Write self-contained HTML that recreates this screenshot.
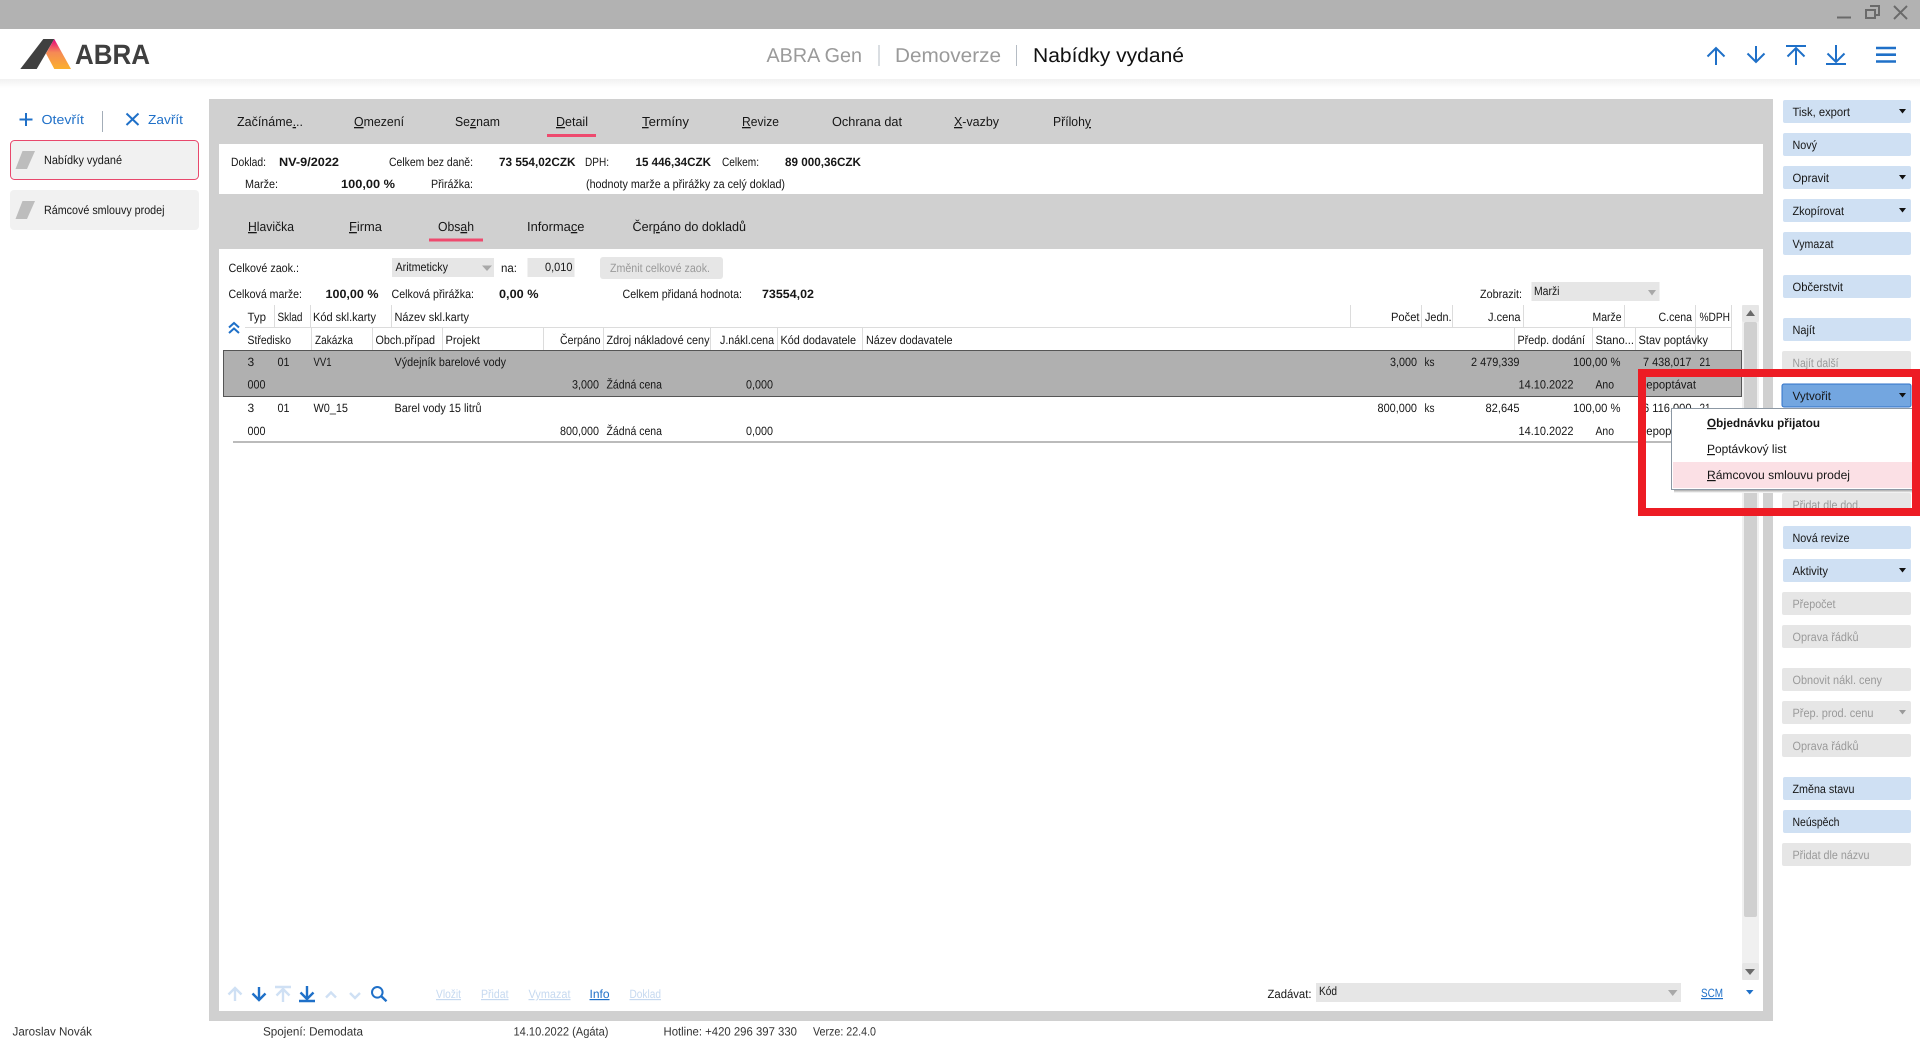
<!DOCTYPE html>
<html lang="cs">
<head>
<meta charset="utf-8">
<title>ABRA Gen - Nabídky vydané</title>
<style>
html,body{margin:0;padding:0;background:#fff;width:1920px;height:1040px;overflow:hidden}
svg{display:block;position:absolute;left:0;top:0}
text{font-family:"Liberation Sans",Arial,sans-serif;font-size:12px;fill:#161616;text-rendering:geometricPrecision;white-space:pre}
.b{font-weight:bold}
.t{font-size:13px}
.s{font-size:12px;fill:#1f70c8}
.o{font-size:13px;fill:#1f70c8}
.g{fill:#9a9a9a}
.h{font-size:20px}
.u{text-decoration:underline}
.p{fill:#c6d9f0;text-decoration:underline}
.l{fill:#1f70c8;text-decoration:underline}
.ic{fill:none;stroke:#1f70c8;stroke-width:2}
.ip{fill:none;stroke:#cfe0f4;stroke-width:2.4}
.ib{fill:none;stroke:#1f70c8;stroke-width:2.4}
.w{fill:none;stroke:#6a6a6a;stroke-width:2}
.btn{fill:#cfe0f3}
.dis{fill:#e6e6e6}
.sep{stroke:#dcdcdc;stroke-width:1}
</style>
</head>
<body>
<svg width="1920" height="1040" viewBox="0 0 1920 1040" xmlns="http://www.w3.org/2000/svg">
<defs>
<linearGradient id="lg" x1="0" y1="0" x2="0" y2="1"><stop offset="0" stop-color="#e6007e"/><stop offset=".45" stop-color="#f58a55"/><stop offset="1" stop-color="#fbb02d"/></linearGradient>
<linearGradient id="hs" x1="0" y1="0" x2="0" y2="1"><stop offset="0" stop-color="#f1f1f1"/><stop offset="1" stop-color="#fff"/></linearGradient>
<linearGradient id="ms" x1="0" y1="0" x2="0" y2="1"><stop offset="0" stop-color="#8e8e8e"/><stop offset="1" stop-color="#fff"/></linearGradient>
</defs>

<!-- title bar -->
<rect width="1920" height="29" fill="#b2b2b2"/>
<path d="M1837 17.5h14" class="w"/>
<path d="M1870 6h9v9h-4M1866 10h9v8h-9z" class="w"/>
<path d="M1894 6l13 13M1907 6l-13 13" class="w"/>

<!-- header -->
<rect y="29" width="1920" height="50" fill="#fff"/>
<rect y="79" width="1920" height="9" fill="url(#hs)"/>
<polygon points="20.3,69 43.3,39 54.3,39 36.7,69" fill="#404040"/>
<polygon points="54.3,39 71,69 54.3,69 46,53.5" fill="url(#lg)"/>
<text x="75" y="64" textLength="75" lengthAdjust=spacingAndGlyphs class="b" style="font-size:28px;fill:#3f3f3f">ABRA</text>
<text x="766.500" y="62" textLength="95.500" lengthAdjust=spacingAndGlyphs class="h" style="fill:#9a9a9a">ABRA Gen</text>
<rect x="878.500" y="45" width="1" height="21" fill="#b5bcc4"/>
<text x="895" y="62" textLength="106" lengthAdjust=spacingAndGlyphs class="h" style="fill:#9a9a9a">Demoverze</text>
<rect x="1016" y="45" width="1" height="21" fill="#b5bcc4"/>
<text x="1033" y="62" textLength="151" lengthAdjust=spacingAndGlyphs class="h" style="fill:#111">Nabídky vydané</text>

<!-- header icons -->
<path d="M1716 65V48M1707.500 56.500l8.500-8.500 8.500 8.500" class="ic"/>
<path d="M1756 46V62M1747.500 53.500l8.500 8.500 8.500-8.500" class="ic"/>
<path d="M1786 46h20M1796 65V48M1787.500 56.500l8.500-8.500 8.500 8.500" class="ic"/>
<path d="M1836 45V62M1827.500 53.500l8.500 8.500 8.500-8.500M1826 64h20" class="ic"/>
<path d="M1876 48h20M1876 54.700h20M1876 61.500h20" fill="none" stroke="#1f70c8" stroke-width="2.600"/>

<!-- left sidebar -->
<path d="M26 113v13M19.500 119.500h13" fill="none" stroke="#1f70c8" stroke-width="2"/>
<text x="41.500" y="124" textLength="42.500" lengthAdjust=spacingAndGlyphs class="o">Otevřít</text>
<rect x="102" y="111" width="1" height="21" fill="#a3adb8"/>
<path d="M126.500 113.500l12 11.500M138.500 113.500l-12 11.500" fill="none" stroke="#1f70c8" stroke-width="2"/>
<text x="148" y="124" textLength="35" lengthAdjust=spacingAndGlyphs class="o">Zavřít</text>
<rect x="10.500" y="140.500" width="188" height="39" rx="4" fill="#f1f1f1" stroke="#e8486c"/>
<polygon points="22.500,151 35,151 27,169 15.500,169" fill="#bdbdbd"/>
<text x="44" y="164" textLength="78" lengthAdjust=spacingAndGlyphs>Nabídky vydané</text>
<rect x="10" y="190" width="189" height="40" rx="4" fill="#f1f1f1"/>
<polygon points="22.500,201 35,201 27,219 15.500,219" fill="#bdbdbd"/>
<text x="44" y="214" textLength="120.500" lengthAdjust=spacingAndGlyphs>Rámcové smlouvy prodej</text>

<!-- main panel -->
<rect x="209" y="99" width="1564" height="922" fill="#d0d0d0"/>
<rect x="219" y="144" width="1544" height="50" fill="#fff"/>
<rect x="219" y="249" width="1544" height="762" fill="#fff"/>

<!-- top tabs -->
<text x="237" y="126" textLength="66" lengthAdjust=spacingAndGlyphs class="t">Začínáme<tspan class="u">.</tspan>..</text>
<text x="354" y="126" textLength="50" lengthAdjust=spacingAndGlyphs class="t"><tspan class="u">O</tspan>mezení</text>
<text x="455" y="126" textLength="45" lengthAdjust=spacingAndGlyphs class="t">Se<tspan class="u">z</tspan>nam</text>
<text x="556" y="126" textLength="32" lengthAdjust=spacingAndGlyphs class="t"><tspan class="u">D</tspan>etail</text>
<rect x="547" y="134" width="49" height="3" fill="#ee4a6e"/>
<text x="642" y="126" textLength="47" lengthAdjust=spacingAndGlyphs class="t"><tspan class="u">T</tspan>ermíny</text>
<text x="742" y="126" textLength="37" lengthAdjust=spacingAndGlyphs class="t"><tspan class="u">R</tspan>evize</text>
<text x="832" y="126" textLength="70" lengthAdjust=spacingAndGlyphs class="t">Ochrana dat</text>
<text x="954" y="126" textLength="45" lengthAdjust=spacingAndGlyphs class="t"><tspan class="u">X</tspan>-vazby</text>
<text x="1053" y="126" textLength="38" lengthAdjust=spacingAndGlyphs class="t">Příloh<tspan class="u">y</tspan></text>

<!-- info band -->
<text x="231" y="166" textLength="35" lengthAdjust=spacingAndGlyphs>Doklad:</text>
<text x="279" y="166" textLength="60" lengthAdjust=spacingAndGlyphs class="b">NV-9/2022</text>
<text x="389" y="166" textLength="84" lengthAdjust=spacingAndGlyphs>Celkem bez daně:</text>
<text x="499" y="166" textLength="76.500" lengthAdjust=spacingAndGlyphs class="b">73 554,02CZK</text>
<text x="585" y="166" textLength="24" lengthAdjust=spacingAndGlyphs>DPH:</text>
<text x="635.500" y="166" textLength="75.500" lengthAdjust=spacingAndGlyphs class="b">15 446,34CZK</text>
<text x="722" y="166" textLength="37" lengthAdjust=spacingAndGlyphs>Celkem:</text>
<text x="785" y="166" textLength="76" lengthAdjust=spacingAndGlyphs class="b">89 000,36CZK</text>
<text x="245" y="188" textLength="33" lengthAdjust=spacingAndGlyphs>Marže:</text>
<text x="341" y="188" textLength="54" lengthAdjust=spacingAndGlyphs class="b">100,00 %</text>
<text x="431" y="188" textLength="42" lengthAdjust=spacingAndGlyphs>Přirážka:</text>
<text x="586" y="188" textLength="199" lengthAdjust=spacingAndGlyphs>(hodnoty marže a přirážky za celý doklad)</text>

<!-- sub tabs -->
<text x="248" y="231" textLength="46" lengthAdjust=spacingAndGlyphs class="t"><tspan class="u">H</tspan>lavička</text>
<text x="349" y="231" textLength="33" lengthAdjust=spacingAndGlyphs class="t"><tspan class="u">F</tspan>irma</text>
<text x="438" y="231" textLength="36" lengthAdjust=spacingAndGlyphs class="t">Obs<tspan class="u">a</tspan>h</text>
<rect x="429" y="238.500" width="54" height="3" fill="#ee4a6e"/>
<text x="527" y="231" textLength="57.500" lengthAdjust=spacingAndGlyphs class="t">Informa<tspan class="u">c</tspan>e</text>
<text x="632.500" y="231" textLength="113.500" lengthAdjust=spacingAndGlyphs class="t">Čer<tspan class="u">p</tspan>áno do dokladů</text>

<!-- form row -->
<text x="228.500" y="272" textLength="70.500" lengthAdjust=spacingAndGlyphs>Celkové zaok.:</text>
<rect x="392" y="258" width="102" height="19" fill="#e6e6e6"/>
<text x="395.500" y="271" textLength="52.500" lengthAdjust=spacingAndGlyphs>Aritmeticky</text>
<polygon points="482,265.500 492,265.500 487,271" fill="#a8a8a8"/>
<text x="501" y="272" textLength="16" lengthAdjust=spacingAndGlyphs>na:</text>
<rect x="527.500" y="258" width="47" height="19" fill="#e6e6e6"/>
<text x="545" y="271" textLength="27.500" lengthAdjust=spacingAndGlyphs>0,010</text>
<rect x="600" y="257" width="123" height="22" rx="3" fill="#e6e6e6"/>
<text x="610" y="272" textLength="100" lengthAdjust=spacingAndGlyphs class="g">Změnit celkové zaok.</text>

<text x="228.500" y="298" textLength="73.500" lengthAdjust=spacingAndGlyphs>Celková marže:</text>
<text x="325.500" y="298" textLength="53" lengthAdjust=spacingAndGlyphs class="b">100,00 %</text>
<text x="391.500" y="298" textLength="82.500" lengthAdjust=spacingAndGlyphs>Celková přirážka:</text>
<text x="499" y="298" textLength="39.500" lengthAdjust=spacingAndGlyphs class="b">0,00 %</text>
<text x="622.500" y="298" textLength="119.500" lengthAdjust=spacingAndGlyphs>Celkem přidaná hodnota:</text>
<text x="762" y="298" textLength="52" lengthAdjust=spacingAndGlyphs class="b">73554,02</text>
<text x="1480" y="298" textLength="42" lengthAdjust=spacingAndGlyphs>Zobrazit:</text>
<rect x="1531.500" y="282" width="128" height="19" fill="#e6e6e6"/>
<text x="1534" y="295" textLength="25.500" lengthAdjust=spacingAndGlyphs>Marži</text>
<polygon points="1648,290 1656,290 1652,295.500" fill="#a8a8a8"/>

<!-- table header -->
<path d="M229 333l5-4.500 5 4.500M229 327.500l5-4.500 5 4.500" fill="none" stroke="#1f70c8" stroke-width="2"/>
<rect x="245" y="327" width="487" height="1" fill="#dcdcdc"/>
<rect x="732" y="327" width="1000" height="1" fill="#dcdcdc"/>
<path class="sep" d="M274.500 305v22M310.500 305v22M391.500 305v22M1350.500 305v22M1421.500 305v22M1452.500 305v22M1523.500 305v22M1624.500 305v22M1695.500 305v22M1731.500 305v22"/>
<path class="sep" d="M311.500 328v22M372.500 328v22M442.500 328v22M543.500 328v22M603.500 328v22M710.500 328v22M777.500 328v22M862.500 328v22M1514.500 328v22M1592.500 328v22M1635.500 328v22M1695.500 328v22M1731.500 328v22"/>
<text x="247.500" y="321" textLength="18.500" lengthAdjust=spacingAndGlyphs>Typ</text>
<text x="277.500" y="321" textLength="25" lengthAdjust=spacingAndGlyphs>Sklad</text>
<text x="313" y="321" textLength="63" lengthAdjust=spacingAndGlyphs>Kód skl.karty</text>
<text x="394.500" y="321" textLength="74.500" lengthAdjust=spacingAndGlyphs>Název skl.karty</text>
<text x="1391" y="321" textLength="28.500" lengthAdjust=spacingAndGlyphs>Počet</text>
<text x="1425" y="321" textLength="26.500" lengthAdjust=spacingAndGlyphs>Jedn.</text>
<text x="1488" y="321" textLength="32.500" lengthAdjust=spacingAndGlyphs>J.cena</text>
<text x="1592.500" y="321" textLength="29" lengthAdjust=spacingAndGlyphs>Marže</text>
<text x="1658.500" y="321" textLength="33.500" lengthAdjust=spacingAndGlyphs>C.cena</text>
<text x="1699.500" y="321" textLength="30.500" lengthAdjust=spacingAndGlyphs>%DPH</text>
<text x="247.500" y="344" textLength="43.500" lengthAdjust=spacingAndGlyphs>Středisko</text>
<text x="315" y="344" textLength="38" lengthAdjust=spacingAndGlyphs>Zakázka</text>
<text x="375.500" y="344" textLength="59.500" lengthAdjust=spacingAndGlyphs>Obch.případ</text>
<text x="445.500" y="344" textLength="34.500" lengthAdjust=spacingAndGlyphs>Projekt</text>
<text x="560" y="344" textLength="40.500" lengthAdjust=spacingAndGlyphs>Čerpáno</text>
<text x="606.500" y="344" textLength="103" lengthAdjust=spacingAndGlyphs>Zdroj nákladové ceny</text>
<text x="720" y="344" textLength="54" lengthAdjust=spacingAndGlyphs>J.nákl.cena</text>
<text x="780.500" y="344" textLength="75.500" lengthAdjust=spacingAndGlyphs>Kód dodavatele</text>
<text x="866" y="344" textLength="86.500" lengthAdjust=spacingAndGlyphs>Název dodavatele</text>
<text x="1517.500" y="344" textLength="67.500" lengthAdjust=spacingAndGlyphs>Předp. dodání</text>
<text x="1595.500" y="344" textLength="38.500" lengthAdjust=spacingAndGlyphs>Stano...</text>
<text x="1638.500" y="344" textLength="69.500" lengthAdjust=spacingAndGlyphs>Stav poptávky</text>

<!-- selected row -->
<rect x="223.500" y="350.500" width="1518" height="46" fill="#b0b0b0" stroke="#555"/>
<text x="247.500" y="366">3</text>
<text x="277.500" y="366" textLength="12" lengthAdjust=spacingAndGlyphs>01</text>
<text x="313.500" y="366" textLength="18" lengthAdjust=spacingAndGlyphs>VV1</text>
<text x="394.500" y="366" textLength="111.500" lengthAdjust=spacingAndGlyphs>Výdejník barelové vody</text>
<text x="1390" y="366" textLength="27" lengthAdjust=spacingAndGlyphs>3,000</text>
<text x="1424.500" y="366" textLength="10" lengthAdjust=spacingAndGlyphs>ks</text>
<text x="1471" y="366" textLength="48.500" lengthAdjust=spacingAndGlyphs>2 479,339</text>
<text x="1573" y="366" textLength="47.500" lengthAdjust=spacingAndGlyphs>100,00 %</text>
<text x="1643" y="366" textLength="48.500" lengthAdjust=spacingAndGlyphs>7 438,017</text>
<text x="1699.500" y="366" textLength="11" lengthAdjust=spacingAndGlyphs>21</text>
<text x="247.500" y="388.500" textLength="18" lengthAdjust=spacingAndGlyphs>000</text>
<text x="572" y="388.500" textLength="27" lengthAdjust=spacingAndGlyphs>3,000</text>
<text x="606.500" y="388.500" textLength="55.500" lengthAdjust=spacingAndGlyphs>Žádná cena</text>
<text x="746" y="388.500" textLength="27" lengthAdjust=spacingAndGlyphs>0,000</text>
<text x="1518.500" y="388.500" textLength="55" lengthAdjust=spacingAndGlyphs>14.10.2022</text>
<text x="1595.500" y="388.500" textLength="18.500" lengthAdjust=spacingAndGlyphs>Ano</text>
<text x="1640" y="388.500" textLength="56" lengthAdjust=spacingAndGlyphs>nepoptávat</text>

<!-- second row -->
<text x="247.500" y="412">3</text>
<text x="277.500" y="412" textLength="12" lengthAdjust=spacingAndGlyphs>01</text>
<text x="313.500" y="412" textLength="34.500" lengthAdjust=spacingAndGlyphs>W0_15</text>
<text x="394.500" y="412" textLength="87" lengthAdjust=spacingAndGlyphs>Barel vody 15 litrů</text>
<text x="1377.500" y="412" textLength="39.500" lengthAdjust=spacingAndGlyphs>800,000</text>
<text x="1424.500" y="412" textLength="10" lengthAdjust=spacingAndGlyphs>ks</text>
<text x="1485.500" y="412" textLength="34" lengthAdjust=spacingAndGlyphs>82,645</text>
<text x="1573" y="412" textLength="47.500" lengthAdjust=spacingAndGlyphs>100,00 %</text>
<text x="1643" y="412" textLength="48.500" lengthAdjust=spacingAndGlyphs>6 116,000</text>
<text x="1699.500" y="412" textLength="11" lengthAdjust=spacingAndGlyphs>21</text>
<text x="247.500" y="435" textLength="18" lengthAdjust=spacingAndGlyphs>000</text>
<text x="560" y="435" textLength="39" lengthAdjust=spacingAndGlyphs>800,000</text>
<text x="606.500" y="435" textLength="55.500" lengthAdjust=spacingAndGlyphs>Žádná cena</text>
<text x="746" y="435" textLength="27" lengthAdjust=spacingAndGlyphs>0,000</text>
<text x="1518.500" y="435" textLength="55" lengthAdjust=spacingAndGlyphs>14.10.2022</text>
<text x="1595.500" y="435" textLength="18.500" lengthAdjust=spacingAndGlyphs>Ano</text>
<text x="1640" y="435" textLength="56" lengthAdjust=spacingAndGlyphs>nepoptávat</text>
<rect x="233" y="441.500" width="1508" height="1" fill="#777"/>

<!-- scrollbar -->
<rect x="1742" y="305" width="17" height="675" fill="#f0f0f0"/>
<rect x="1742" y="305" width="17" height="17" rx="2" fill="#e6e6e6"/>
<polygon points="1746,316 1755,316 1750.500,310" fill="#6a6a6a"/>
<rect x="1744" y="322" width="13" height="595" rx="2" fill="#d0d0d0"/>
<rect x="1742" y="963" width="17" height="17" rx="2" fill="#e6e6e6"/>
<polygon points="1745,969 1755,969 1750,975" fill="#6a6a6a"/>

<!-- bottom toolbar -->
<path class="ip" d="M235 1001V988M228.500 994.500l6.500-6.500 6.500 6.500"/>
<path class="ib" d="M259 987V1000M252.500 993.500l6.500 6.500 6.500-6.500"/>
<path class="ip" d="M275 987h16M283 1002V989M276.500 995.500l6.500-6.500 6.500 6.500"/>
<path class="ib" d="M307 986V999M300.500 992.500l6.500 6.500 6.500-6.500M299 1001h16"/>
<path class="ip" d="M326 997.500l5-5 5 5"/>
<path class="ip" d="M350 993l5 5 5-5"/>
<circle cx="377.300" cy="992.300" r="5.300" fill="none" stroke="#1f70c8" stroke-width="2"/>
<path class="ib" d="M381.300 996.300l5.200 5"/>
<text x="436" y="998" textLength="25" lengthAdjust=spacingAndGlyphs class="p">Vložit</text>
<text x="481" y="998" textLength="27.500" lengthAdjust=spacingAndGlyphs class="p">Přidat</text>
<text x="528.500" y="998" textLength="42" lengthAdjust=spacingAndGlyphs class="p">Vymazat</text>
<text x="589.500" y="998" textLength="20" lengthAdjust=spacingAndGlyphs class="l">Info</text>
<text x="629.500" y="998" textLength="31.500" lengthAdjust=spacingAndGlyphs class="p">Doklad</text>
<text x="1267.500" y="998" textLength="44" lengthAdjust=spacingAndGlyphs>Zadávat:</text>
<rect x="1316" y="983" width="365" height="19" fill="#e6e6e6"/>
<text x="1319" y="995" textLength="18" lengthAdjust=spacingAndGlyphs>Kód</text>
<polygon points="1668,990 1677.500,990 1672.700,996" fill="#a8a8a8"/>
<text x="1701" y="997" textLength="22" lengthAdjust=spacingAndGlyphs class="l">SCM</text>
<polygon points="1746,990 1753.500,990 1749.700,994.500" fill="#1f70c8"/>

<!-- status bar -->
<text x="12.500" y="1035.500" textLength="79.500" lengthAdjust=spacingAndGlyphs style="fill:#333">Jaroslav Novák</text>
<text x="263" y="1035.500" textLength="100" lengthAdjust=spacingAndGlyphs style="fill:#333">Spojení: Demodata</text>
<text x="513.500" y="1035.500" textLength="95" lengthAdjust=spacingAndGlyphs style="fill:#333">14.10.2022 (Agáta)</text>
<text x="663.500" y="1035.500" textLength="133.500" lengthAdjust=spacingAndGlyphs style="fill:#333">Hotline: +420 296 397 330</text>
<text x="813" y="1035.500" textLength="63" lengthAdjust=spacingAndGlyphs style="fill:#333">Verze: 22.4.0</text>

<!-- right buttons -->
<rect class="btn" x="1783" y="100" width="128" height="23" rx="2"/>
<text x="1792.500" y="116" textLength="57.500" lengthAdjust=spacingAndGlyphs>Tisk, export</text>
<polygon points="1899,109 1906,109 1902.500,113.500" fill="#111"/>
<rect class="btn" x="1783" y="133" width="128" height="23" rx="2"/>
<text x="1792.500" y="149" textLength="24.500" lengthAdjust=spacingAndGlyphs>Nový</text>
<rect class="btn" x="1783" y="166" width="128" height="23" rx="2"/>
<text x="1792.500" y="182" textLength="36.500" lengthAdjust=spacingAndGlyphs>Opravit</text>
<polygon points="1899,175 1906,175 1902.500,179.500" fill="#111"/>
<rect class="btn" x="1783" y="199" width="128" height="23" rx="2"/>
<text x="1792.500" y="215" textLength="51.500" lengthAdjust=spacingAndGlyphs>Zkopírovat</text>
<polygon points="1899,208 1906,208 1902.500,212.500" fill="#111"/>
<rect class="btn" x="1783" y="232" width="128" height="23" rx="2"/>
<text x="1792.500" y="248" textLength="41" lengthAdjust=spacingAndGlyphs>Vymazat</text>
<rect class="btn" x="1783" y="275" width="128" height="23" rx="2"/>
<text x="1792.500" y="291" textLength="50.500" lengthAdjust=spacingAndGlyphs>Občerstvit</text>
<rect class="btn" x="1783" y="318" width="128" height="23" rx="2"/>
<text x="1792.500" y="334" textLength="22.500" lengthAdjust=spacingAndGlyphs>Najít</text>
<rect class="dis" x="1782" y="351" width="129" height="23" rx="2"/>
<text x="1792.500" y="367" textLength="46" lengthAdjust=spacingAndGlyphs class="g">Najít další</text>
<rect x="1782" y="384" width="129" height="23" rx="2" fill="#73a6e0" stroke="#2f72c8"/>
<text x="1792.500" y="400" textLength="38.500" lengthAdjust=spacingAndGlyphs>Vytvořit</text>
<polygon points="1899,393 1906,393 1902.500,397.500" fill="#111"/>
<rect class="dis" x="1782" y="493" width="129" height="23" rx="2"/>
<text x="1792.500" y="509" textLength="68.500" lengthAdjust=spacingAndGlyphs class="g">Přidat dle dod.</text>
<rect class="btn" x="1783" y="526" width="128" height="23" rx="2"/>
<text x="1792.500" y="542" textLength="57" lengthAdjust=spacingAndGlyphs>Nová revize</text>
<rect class="btn" x="1783" y="559" width="128" height="23" rx="2"/>
<text x="1792.500" y="575" textLength="35.500" lengthAdjust=spacingAndGlyphs>Aktivity</text>
<polygon points="1899,568 1906,568 1902.500,572.500" fill="#111"/>
<rect class="dis" x="1782" y="592" width="129" height="23" rx="2"/>
<text x="1792.500" y="608" textLength="43" lengthAdjust=spacingAndGlyphs class="g">Přepočet</text>
<rect class="dis" x="1782" y="625" width="129" height="23" rx="2"/>
<text x="1792.500" y="641" textLength="66" lengthAdjust=spacingAndGlyphs class="g">Oprava řádků</text>
<rect class="dis" x="1782" y="668" width="129" height="23" rx="2"/>
<text x="1792.500" y="684" textLength="89.500" lengthAdjust=spacingAndGlyphs class="g">Obnovit nákl. ceny</text>
<rect class="dis" x="1782" y="701" width="129" height="23" rx="2"/>
<text x="1792.500" y="717" textLength="81" lengthAdjust=spacingAndGlyphs class="g">Přep. prod. cenu</text>
<polygon points="1899,710 1906,710 1902.500,714.500" fill="#9a9a9a"/>
<rect class="dis" x="1782" y="734" width="129" height="23" rx="2"/>
<text x="1792.500" y="750" textLength="66" lengthAdjust=spacingAndGlyphs class="g">Oprava řádků</text>
<rect class="btn" x="1783" y="777" width="128" height="23" rx="2"/>
<text x="1792.500" y="793" textLength="62" lengthAdjust=spacingAndGlyphs>Změna stavu</text>
<rect class="btn" x="1783" y="810" width="128" height="23" rx="2"/>
<text x="1792.500" y="826" textLength="47" lengthAdjust=spacingAndGlyphs>Neúspěch</text>
<rect class="dis" x="1782" y="843" width="129" height="23" rx="2"/>
<text x="1792.500" y="859" textLength="77" lengthAdjust=spacingAndGlyphs class="g">Přidat dle názvu</text>

<!-- dropdown menu -->
<rect x="1674" y="489" width="240" height="4" fill="url(#ms)"/>
<rect x="1671.500" y="408.500" width="245" height="81" fill="#fff" stroke="#8c98a4"/>
<rect x="1673" y="462" width="247" height="26" fill="#fbe0e5"/>
<text x="1707" y="427" textLength="113" lengthAdjust=spacingAndGlyphs class="b"><tspan class="u">O</tspan>bjednávku přijatou</text>
<text x="1707" y="453" textLength="79.500" lengthAdjust=spacingAndGlyphs><tspan class="u">P</tspan>optávkový list</text>
<text x="1707" y="479" textLength="143" lengthAdjust=spacingAndGlyphs><tspan class="u">R</tspan>ámcovou smlouvu prodej</text>

<!-- red highlight frame -->
<path fill="#ed1c24" fill-rule="evenodd" d="M1638 369H1920V516H1638ZM1646 377V508H1912V377Z"/>
</svg>
</body>
</html>
